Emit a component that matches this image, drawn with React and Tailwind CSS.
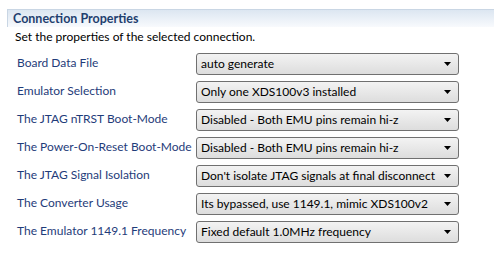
const rows = [
  ['Board Data File', 'auto generate'],
  ['Emulator Selection', 'Only one XDS100v3 installed'],
  ['The JTAG nTRST Boot-Mode', 'Disabled - Both EMU pins remain hi-z'],
  ['The Power-On-Reset Boot-Mode', 'Disabled - Both EMU pins remain hi-z'],
  ['The JTAG Signal Isolation', "Don't isolate JTAG signals at final disconnect"],
  ['The Converter Usage', 'Its bypassed, use 1149.1, mimic XDS100v2'],
  ['The Emulator 1149.1 Frequency', 'Fixed default 1.0MHz frequency'],
]

function Combo({ value }) {
  return (
    <div className="w-[263px] h-[22px] shrink-0 rounded-[3px] border border-[#707070] bg-gradient-to-b from-[#f3f3f3] to-[#dddddd] flex items-center pl-[4px] pr-[6px] text-black">
      <span className="flex-1 whitespace-nowrap leading-[16px]">{value}</span>
      <svg width="8" height="5" viewBox="0 0 8 5"><path d="M0 0h7L3.5 4z" fill="#000" /></svg>
    </div>
  )
}

export default function App() {
  return (
    <div className="w-[494px] h-[278px] bg-white text-[12px] leading-[16px] font-['Lato',sans-serif] pt-[9px] pl-[7px] overflow-hidden">
      <div className="h-[18px] border-t border-l border-[#c9d6e4] bg-gradient-to-b from-[#dce6f1] to-[#f8fafd] pl-[5px] flex items-center">
        <span className="font-bold text-[#1f3f6f] text-[12.5px]">Connection Properties</span>
      </div>
      <div className="pl-[8px] pt-[2px] h-[26px]">Set the properties of the selected connection.</div>
      <div className="flex flex-col gap-[6px]">
        {rows.map(([label, value]) => (
          <div key={label} className="flex items-start">
            <div className="w-[189px] shrink-0 whitespace-nowrap pl-[10px] pt-[2px] text-[#1f3c7a]">{label}</div>
            <Combo value={value} />
          </div>
        ))}
      </div>
    </div>
  )
}
